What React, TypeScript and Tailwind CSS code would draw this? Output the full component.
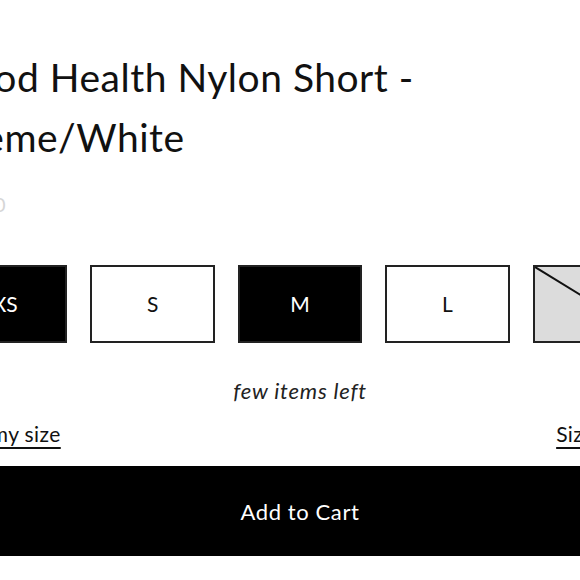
import React from "react";

const sizes = [
  { label: "XS", state: "filled" },
  { label: "S", state: "open" },
  { label: "M", state: "filled" },
  { label: "L", state: "open" },
  { label: "XL", state: "soldout" },
];

export default function App() {
  return (
    <div className="w-[580px] h-[580px] overflow-hidden bg-white text-[#111] font-['Lato','Liberation_Sans',sans-serif]">
      <div className="-ml-[57px] w-[714px] pt-[47px]">
        <h1 className="text-[39px] leading-[60px] font-normal tracking-[0.5px]">
          Good Health Nylon Short -<br />
          Creme/White
        </h1>
        <p className="mt-[22px] text-[20px] leading-[30px] text-[#d6d6d6]">$45.00</p>

        <div className="mt-[46px] grid grid-cols-5 gap-[23px]">
          {sizes.map((s) => (
            <div
              key={s.label}
              className={`relative h-[78px] border-2 border-[#222] flex items-center justify-center text-[21px] overflow-hidden ${
                s.state === "filled"
                  ? "bg-black text-white"
                  : s.state === "soldout"
                  ? "bg-[#dcdcdc] text-[#555]"
                  : "bg-white text-[#111]"
              }`}
            >
              {s.state === "soldout" && (
                <svg className="absolute inset-0 w-full h-full" preserveAspectRatio="none" viewBox="0 0 100 100">
                  <line x1="0" y1="0" x2="100" y2="100" stroke="#111" strokeWidth="2" vectorEffect="non-scaling-stroke" />
                </svg>
              )}
              <span className="relative">{s.label}</span>
            </div>
          ))}
        </div>

        <p className="mt-[33px] text-center italic text-[22px] leading-[30px] tracking-[0.8px] text-[#222]">few items left</p>

        <div className="mt-[13px] flex justify-between text-[21px] leading-[30px] tracking-[0.4px]">
          <a className="underline underline-offset-[5px] decoration-[1.5px]">Find my size</a>
          <a className="underline underline-offset-[5px] decoration-[1.5px]">Size Guide</a>
        </div>

        <button className="mt-[17px] w-full h-[90px] bg-black text-white text-[22px] tracking-[0.6px] flex items-center justify-center">
          Add to Cart
        </button>
      </div>
    </div>
  );
}
